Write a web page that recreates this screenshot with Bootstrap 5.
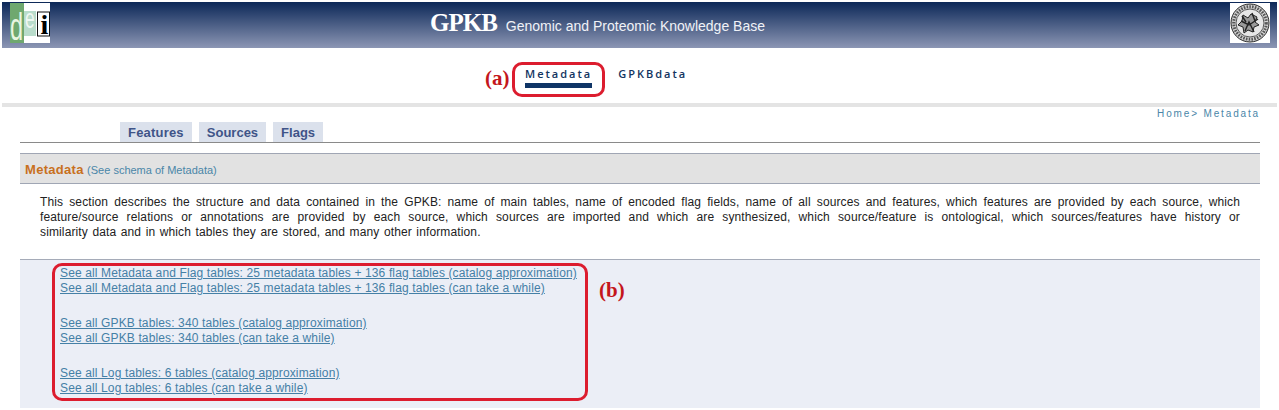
<!DOCTYPE html>
<html lang="en">
<head>
<meta charset="UTF-8">
<meta name="viewport" content="width=device-width, initial-scale=1.0">
<link href="https://cdn.jsdelivr.net/npm/bootstrap@5.3.3/dist/css/bootstrap.min.css" rel="stylesheet">
<script defer src="https://cdn.jsdelivr.net/npm/bootstrap@5.3.3/dist/js/bootstrap.bundle.min.js"></script>
<title>GPKB Metadata</title>
<style>
  html, body { height: 410px; overflow: hidden; }
  body { background: #fff; font-family: "Liberation Sans", Arial, sans-serif; font-size: 12px; line-height: 15px; color: #222; position: relative; }
  .top-banner { margin: 2px 2px 0; height: 46px; background: linear-gradient(#0c2858, #8c96b4); padding-left: 8px; padding-right: 7px; }
  .logo-box { width: 40px; height: 40px; margin-top: 1px; overflow: visible; }
  .seal-box { width: 40px; height: 40px; margin-top: 1px; }
  .banner-title { margin-left: 380px; padding-top: 6px; color: #fff; white-space: nowrap; }
  .banner-big { font-family: "Liberation Serif", serif; font-weight: 700; font-size: 25px; line-height: 30px; letter-spacing: -1px; }
  .banner-sub { font-size: 14px; margin-left: 9px; color: #f0f2f7; }
  .main-nav { height: 55px; padding-left: 525px; padding-top: 18px; gap: 26px; }
  .main-nav a { font-family: "Open Sans", sans-serif; font-weight: 600; font-size: 11px; line-height: 15px; letter-spacing: 2px; color: #12345f; text-decoration: none; height: 22px; display: block; }
  .main-nav a.on { border-bottom: 5px solid #0f3566; }
  .grey-rule { margin: 0 2px; height: 4px; background: #e4e4e4; }
  .crumbs { margin: 0 19px 0 20px; height: 15px; text-align: right; font-size: 10px; line-height: 13px; letter-spacing: 1.85px; color: #4a86a8; }
  .tab-row { margin: 0 19px 0 20px; height: 20px; padding-left: 100px; gap: 7px; border-bottom: 1px solid #8a8a8a; box-sizing: content-box; }
  .tab-row a { background: #dbe1ec; color: #3f5488; font-weight: 700; font-size: 13px; line-height: 21px; padding: 0 8px; text-decoration: none; }
  .tab-row a:first-child { letter-spacing: .2px; }
  .section-bar { margin: 10px 19px 0 20px; height: 31px; background: #e2e2e2; border-top: 1px solid #a0a6b4; border-bottom: 1px solid #a0a6b4; padding-left: 5px; line-height: 31px; }
  .section-name { color: #c8701e; font-weight: 700; font-size: 13px; letter-spacing: .3px; }
  .section-link { color: #4a86a8; font-size: 11px; }
  .intro { margin: 11px 39px 0 40px; letter-spacing: .13px; }
  .intro-line { display: block; text-align: justify; text-align-last: justify; }
  .intro-line.tail { text-align-last: left; word-spacing: 1px; }
  .link-panel { margin: 19px 19px 0 20px; height: 149px; background: #ebeef6; border-top: 1px solid #a5abb8; padding: 6px 0 0 40px; }
  .link-panel a { color: #4580a6; display: block; width: max-content; letter-spacing: .13px; }
  .link-panel .gap-after { margin-bottom: 20px; }
  .note-box { position: absolute; border: 3px solid #dc1c2e; border-radius: 10px; }
  .note-a { left: 512px; top: 62px; width: 93px; height: 35px; }
  .note-b { left: 52px; top: 263px; width: 536px; height: 138px; }
  .note-label { position: absolute; font-family: "Liberation Serif", serif; font-weight: 700; font-size: 21px; line-height: 24px; color: #c4161c; }
  .label-a { left: 485px; top: 66px; }
  .label-b { left: 599px; top: 278px; }
</style>
</head>
<body>

<div class="top-banner d-flex align-items-start">
  <svg class="logo-box flex-shrink-0" viewBox="0 0 40 40">
    <rect width="40" height="40" fill="#fff"/>
    <rect width="14" height="40" fill="#6fa86f"/>
    <rect x="14" y="8" width="12" height="25" fill="#b9dccb"/>
    <text transform="translate(0 37) scale(.62 1)" font-family="Liberation Sans" font-size="38" fill="#e8f5e0">d</text>
    <text transform="translate(15 25) scale(.62 1)" font-family="Liberation Sans" font-size="28" fill="#eef7f2">e</text>
    <rect x="27.5" y="9" width="12" height="24" fill="#fff" stroke="#111"/>
    <text x="30.5" y="31" font-family="Liberation Serif" font-weight="700" font-size="28" fill="#000">i</text>
  </svg>
  <div class="banner-title">
    <span class="banner-big">GPKB</span><span class="banner-sub">Genomic and Proteomic Knowledge Base</span>
  </div>
  <svg class="seal-box flex-shrink-0 ms-auto" viewBox="0 0 40 40">
    <rect width="40" height="40" fill="#fff"/>
    <circle cx="20" cy="20" r="19" fill="#d4d4d4" stroke="#222" stroke-width="1"/>
    <circle cx="20" cy="20" r="16.3" fill="none" stroke="#555" stroke-width="3" stroke-dasharray="1.6 1.2"/>
    <circle cx="20" cy="20" r="14" fill="#e6e6e6" stroke="#333" stroke-width=".8"/>
    <path d="M13 12l5 3 3-4 6 3-2 5 4 3-5 2-1 5-5-2-4 3-1-6-5-2 4-4z" fill="#9a9a9a" stroke="#222"/>
    <path d="M11 18l8 4 9-6M15 28l4-9 5 10M12 13l4 6M22 10l3 8" stroke="#222" stroke-width="1.4" fill="none"/>
  </svg>
</div>

<nav class="main-nav d-flex align-items-start">
  <a class="on" href="#">Metadata</a>
  <a href="#">GPKBdata</a>
</nav>
<div class="grey-rule"></div>

<div class="crumbs">Home&gt; Metadata</div>
<div class="tab-row d-flex">
  <a href="#">Features</a>
  <a href="#">Sources</a>
  <a href="#">Flags</a>
</div>

<div class="section-bar">
  <span class="section-name">Metadata</span>
  <span class="section-link">(See schema of Metadata)</span>
</div>

<p class="intro">
  <span class="intro-line">This section describes the structure and data contained in the GPKB: name of main tables, name of encoded flag fields, name of all sources and features, which features are provided by each source, which</span>
  <span class="intro-line">feature/source relations or annotations are provided by each source, which sources are imported and which are synthesized, which source/feature is ontological, which sources/features have history or</span>
  <span class="intro-line tail">similarity data and in which tables they are stored, and many other information.</span>
</p>

<div class="link-panel">
  <a href="#">See all Metadata and Flag tables: 25 metadata tables + 136 flag tables (catalog approximation)</a>
  <a class="gap-after" href="#">See all Metadata and Flag tables: 25 metadata tables + 136 flag tables (can take a while)</a>
  <a href="#">See all GPKB tables: 340 tables (catalog approximation)</a>
  <a class="gap-after" href="#">See all GPKB tables: 340 tables (can take a while)</a>
  <a href="#">See all Log tables: 6 tables (catalog approximation)</a>
  <a href="#">See all Log tables: 6 tables (can take a while)</a>
</div>

<div class="note-box note-a"></div>
<div class="note-box note-b"></div>
<span class="note-label label-a">(a)</span>
<span class="note-label label-b">(b)</span>

</body>
</html>
